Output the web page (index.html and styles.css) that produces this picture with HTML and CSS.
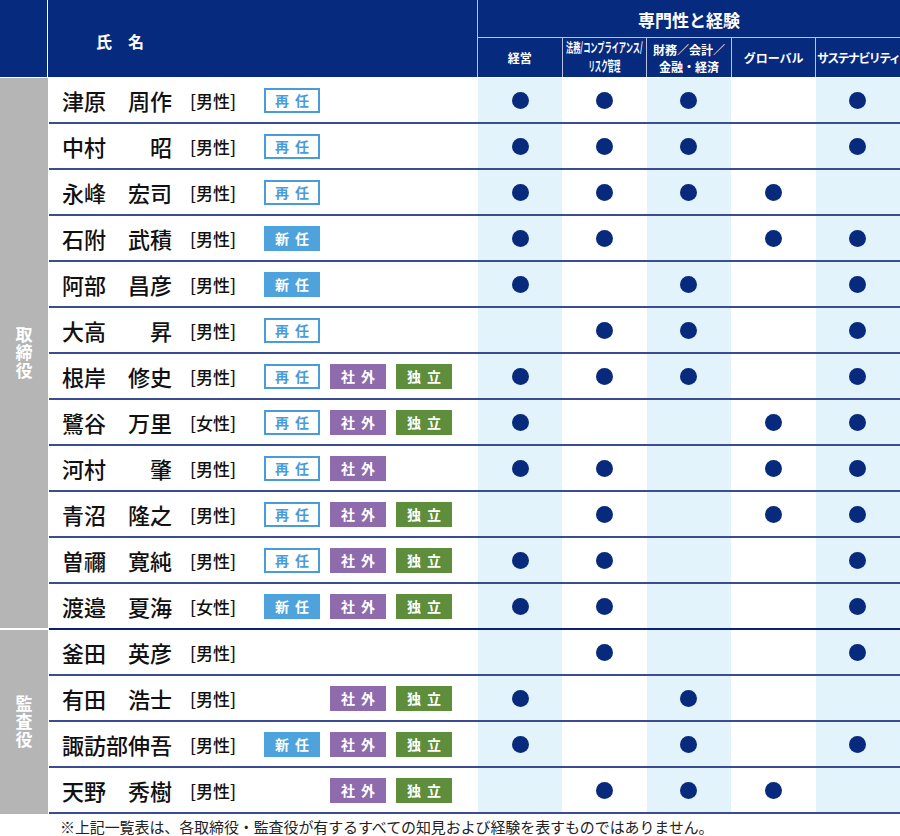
FILE: index.html
```html
<!DOCTYPE html>
<html lang="ja">
<head>
<meta charset="utf-8">
<link rel="stylesheet" href="styles.css">
</head>
<body>
<div class="table">
  <div class="head">
    <div class="hcorner"></div>
    <div class="hname">氏　名</div>
    <div class="hskills">
      <div class="htitle">専門性と経験</div>
      <div class="hcols">
        <div class="hcol">経営</div>
        <div class="hcol"><div class="cond"><span class="l1">法務/コンプライアンス/</span><span class="l2">リスク管理</span></div></div>
        <div class="hcol">財務／会計／<br>金融・経済</div>
        <div class="hcol">グローバル</div>
        <div class="hcol tight">サステナビリティ</div>
      </div>
    </div>
  </div>

  <div class="group g1">
    <div class="side"><span>取締役</span></div>
    <div class="rows">
      <div class="row"><div class="who"><span class="nm">津原　周作</span><span class="gd">[男性]</span><span class="tags"><span class="tag re">再任</span></span></div><div class="c s"><i></i></div><div class="c"><i></i></div><div class="c s"><i></i></div><div class="c"></div><div class="c s"><i></i></div></div>
      <div class="row"><div class="who"><span class="nm">中村　　昭</span><span class="gd">[男性]</span><span class="tags"><span class="tag re">再任</span></span></div><div class="c s"><i></i></div><div class="c"><i></i></div><div class="c s"><i></i></div><div class="c"></div><div class="c s"><i></i></div></div>
      <div class="row"><div class="who"><span class="nm">永峰　宏司</span><span class="gd">[男性]</span><span class="tags"><span class="tag re">再任</span></span></div><div class="c s"><i></i></div><div class="c"><i></i></div><div class="c s"><i></i></div><div class="c"><i></i></div><div class="c s"></div></div>
      <div class="row"><div class="who"><span class="nm">石附　武積</span><span class="gd">[男性]</span><span class="tags"><span class="tag nw">新任</span></span></div><div class="c s"><i></i></div><div class="c"><i></i></div><div class="c s"></div><div class="c"><i></i></div><div class="c s"><i></i></div></div>
      <div class="row"><div class="who"><span class="nm">阿部　昌彦</span><span class="gd">[男性]</span><span class="tags"><span class="tag nw">新任</span></span></div><div class="c s"><i></i></div><div class="c"></div><div class="c s"><i></i></div><div class="c"></div><div class="c s"><i></i></div></div>
      <div class="row"><div class="who"><span class="nm">大高　　昇</span><span class="gd">[男性]</span><span class="tags"><span class="tag re">再任</span></span></div><div class="c s"></div><div class="c"><i></i></div><div class="c s"><i></i></div><div class="c"></div><div class="c s"><i></i></div></div>
      <div class="row"><div class="who"><span class="nm">根岸　修史</span><span class="gd">[男性]</span><span class="tags"><span class="tag re">再任</span><span class="tag ex">社外</span><span class="tag ind">独立</span></span></div><div class="c s"><i></i></div><div class="c"><i></i></div><div class="c s"><i></i></div><div class="c"></div><div class="c s"><i></i></div></div>
      <div class="row"><div class="who"><span class="nm">鷺谷　万里</span><span class="gd">[女性]</span><span class="tags"><span class="tag re">再任</span><span class="tag ex">社外</span><span class="tag ind">独立</span></span></div><div class="c s"><i></i></div><div class="c"></div><div class="c s"></div><div class="c"><i></i></div><div class="c s"><i></i></div></div>
      <div class="row"><div class="who"><span class="nm">河村　　肇</span><span class="gd">[男性]</span><span class="tags"><span class="tag re">再任</span><span class="tag ex">社外</span></span></div><div class="c s"><i></i></div><div class="c"><i></i></div><div class="c s"></div><div class="c"><i></i></div><div class="c s"><i></i></div></div>
      <div class="row"><div class="who"><span class="nm">青沼　隆之</span><span class="gd">[男性]</span><span class="tags"><span class="tag re">再任</span><span class="tag ex">社外</span><span class="tag ind">独立</span></span></div><div class="c s"></div><div class="c"><i></i></div><div class="c s"></div><div class="c"><i></i></div><div class="c s"><i></i></div></div>
      <div class="row"><div class="who"><span class="nm">曽禰　寛純</span><span class="gd">[男性]</span><span class="tags"><span class="tag re">再任</span><span class="tag ex">社外</span><span class="tag ind">独立</span></span></div><div class="c s"><i></i></div><div class="c"><i></i></div><div class="c s"></div><div class="c"></div><div class="c s"><i></i></div></div>
      <div class="row"><div class="who"><span class="nm">渡邉　夏海</span><span class="gd">[女性]</span><span class="tags"><span class="tag nw">新任</span><span class="tag ex">社外</span><span class="tag ind">独立</span></span></div><div class="c s"><i></i></div><div class="c"><i></i></div><div class="c s"></div><div class="c"></div><div class="c s"><i></i></div></div>
    </div>
  </div>

  <div class="group g2">
    <div class="side"><span>監査役</span></div>
    <div class="rows">
      <div class="row"><div class="who"><span class="nm">釜田　英彦</span><span class="gd">[男性]</span><span class="tags"></span></div><div class="c s"></div><div class="c"><i></i></div><div class="c s"></div><div class="c"></div><div class="c s"><i></i></div></div>
      <div class="row"><div class="who"><span class="nm">有田　浩士</span><span class="gd">[男性]</span><span class="tags"><span class="slot"></span><span class="tag ex">社外</span><span class="tag ind">独立</span></span></div><div class="c s"><i></i></div><div class="c"></div><div class="c s"><i></i></div><div class="c"></div><div class="c s"></div></div>
      <div class="row"><div class="who"><span class="nm">諏訪部伸吾</span><span class="gd">[男性]</span><span class="tags"><span class="tag nw">新任</span><span class="tag ex">社外</span><span class="tag ind">独立</span></span></div><div class="c s"><i></i></div><div class="c"></div><div class="c s"><i></i></div><div class="c"></div><div class="c s"><i></i></div></div>
      <div class="row"><div class="who"><span class="nm">天野　秀樹</span><span class="gd">[男性]</span><span class="tags"><span class="slot"></span><span class="tag ex">社外</span><span class="tag ind">独立</span></span></div><div class="c s"></div><div class="c"><i></i></div><div class="c s"><i></i></div><div class="c"><i></i></div><div class="c s"></div></div>
    </div>
  </div>
</div>
<p class="note">※上記一覧表は、各取締役・監査役が有するすべての知見および経験を表すものではありません。</p>
</body>
</html>
```
FILE: styles.css
```css
* { box-sizing: border-box; }
html, body { margin: 0; padding: 0; background: #fff; }
body {
  width: 900px;
  font-family: "Noto Sans CJK JP", "Noto Sans", sans-serif;
  color: #1a1a1a;
}
.table { width: 900px; }

.head {
  display: flex;
  height: 77px;
  background: #062a7e;
  color: #fff;
  font-weight: 700;
  margin-bottom: 1px;
}
.hcorner { width: 48px; border-right: 1px solid #fff; }
.hname {
  width: 429px;
  padding: 30px 0 0 48px;
  font-size: 16px;
  line-height: 22px;
}
.hskills {
  flex: 1;
  display: flex;
  flex-direction: column;
  border-left: 1px solid #b9c2de;
}
.htitle {
  height: 38px;
  border-bottom: 1px solid #b9c2de;
  display: flex;
  align-items: center;
  justify-content: center;
  font-size: 17px;
  padding-top: 2px;
}
.hcols { flex: 1; display: flex; }
.hcol {
  flex: 1;
  display: flex;
  align-items: center;
  justify-content: center;
  text-align: center;
  font-size: 12px;
  line-height: 17px;
  white-space: nowrap;
  min-width: 0;
}
.hcol + .hcol { border-left: 1px solid #b9c2de; }
.hcol.tight { letter-spacing: -1.6px; }
.cond {
  display: flex;
  flex-direction: column;
  align-items: center;
  gap: 9px;
  margin-top: -2px;
}
.cond span { display: block; line-height: 9px; transform-origin: center; }
.cond .l1 { font-size: 7.2px; transform: scaleY(1.8); }
.cond .l2 { font-size: 6.4px; transform: scaleY(2.05); }

.group { display: flex; }
.side {
  width: 48px;
  margin-right: 1px;
  background: #b5b5b5;
  display: flex;
  align-items: center;
  justify-content: center;
  color: #fff;
  font-weight: 700;
  font-size: 17px;
}
.side span { writing-mode: vertical-rl; letter-spacing: 1px; }
.g1 .side { border-bottom: 2px solid #fff; }
.rows { flex: 1; }
.row {
  display: grid;
  grid-template-columns: 429px repeat(5, 1fr);
  height: 46px;
  border-bottom: 2px solid #3a4c92;
}
.g1 .row:last-child { border-bottom-color: #0e2270; }
.who {
  display: flex;
  align-items: center;
  padding-left: 13px;
}
.nm {
  width: 128px;
  font-size: 22px;
  font-weight: 500;
  white-space: pre;
  color: #111;
}
.gd {
  width: 74px;
  font-size: 17px;
  font-weight: 500;
  color: #111;
}
.tags {
  display: grid;
  grid-template-columns: 56px 56px 56px;
  column-gap: 10px;
}
.tag, .slot {
  height: 25px;
  display: flex;
  align-items: center;
  justify-content: center;
  font-size: 14px;
  font-weight: 700;
  letter-spacing: 6px;
  padding-left: 6px;
  color: #fff;
}
.tag.re { border: 2px solid #4a9cd9; color: #4a9cd9; background: #fff; }
.tag.nw { background: #4ea3dc; }
.tag.ex { background: #8e6bac; }
.tag.ind { background: #5e8d3b; }

.c {
  display: flex;
  align-items: center;
  justify-content: center;
}
.c.s { background: #e3f3fc; }
.c i {
  display: block;
  width: 17px;
  height: 17px;
  border-radius: 50%;
  background: #072a7c;
}

.note {
  margin: 4px 0 0 60px;
  font-size: 15px;
  line-height: 18px;
  color: #222;
  letter-spacing: -0.1px;
}
```
